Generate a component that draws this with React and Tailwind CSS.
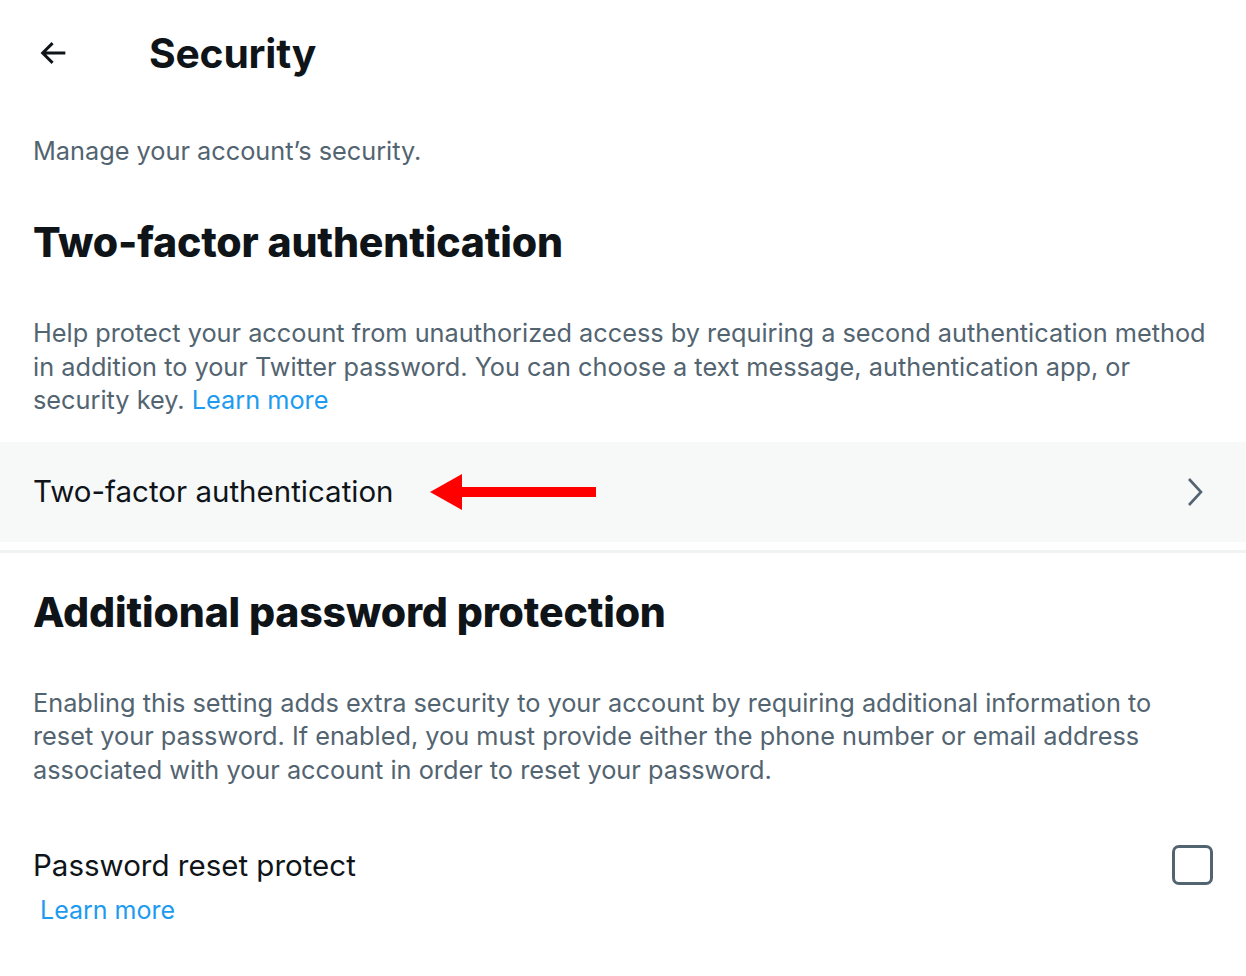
import React from "react";

export default function App() {
  return (
    <div className="min-h-screen w-[1246px] bg-white text-[#0f1419]" style={{ fontFamily: "Inter, 'Noto Sans', sans-serif" }}>
      {/* Header */}
      <div className="flex h-[106px] items-center">
        <div className="flex w-[149px] items-center pl-[37px]">
          <svg width="34" height="34" viewBox="0 0 24 24" fill="none">
            <path d="M20 12H4.5M11 5l-7 7 7 7" stroke="#0f1419" strokeWidth="2.1" strokeLinecap="butt" strokeLinejoin="miter" />
          </svg>
        </div>
        <h1 className="text-[40.8px] font-bold tracking-[-0.2px] leading-none">Security</h1>
      </div>

      <p className="mt-[28px] px-[33px] text-[25.3px] leading-[33px] text-[#536471]">Manage your account’s security.</p>

      <h2 className="mt-[50px] px-[33px] text-[41px] font-extrabold leading-[50px] tracking-[-0.15px]">Two-factor authentication</h2>

      <p className="mt-[49px] px-[33px] pr-[30px] text-[25.3px] leading-[33.5px] text-[#536471]">
        Help protect your account from unauthorized access by requiring a second authentication method in addition to your Twitter password. You can choose a text message, authentication app, or security key.{" "}
        <span className="text-[#1d9bf0]">Learn more</span>
      </p>

      <div className="mt-[25px] flex h-[100px] items-center bg-[#f7f9f9] pl-[33px] pr-[42px]">
        <span className="text-[29.5px] leading-none">Two-factor authentication</span>
        <svg className="ml-[36px]" width="166" height="38" viewBox="0 0 166 38">
          <polygon points="0,19 32,1 32,14 166,14 166,24 32,24 32,37" fill="#ff0000" />
        </svg>
        <div className="flex-1" />
        <svg width="18" height="30" viewBox="0 0 18 30" fill="none">
          <path d="M3 2l12 13L3 28" stroke="#536471" strokeWidth="2.6" />
        </svg>
      </div>

      <div className="mt-[8px] h-[3px] bg-[#eff3f4]" />

      <h2 className="mt-[34px] px-[33px] text-[41px] font-extrabold leading-[50px] tracking-[-0.15px]">Additional password protection</h2>

      <p className="mt-[49px] px-[33px] pr-[60px] text-[25.3px] leading-[33.5px] text-[#536471]">
        Enabling this setting adds extra security to your account by requiring additional information to reset your password. If enabled, you must provide either the phone number or email address associated with your account in order to reset your password.
      </p>

      <div className="mt-[62px] flex items-start justify-between pl-[33px] pr-[33px]">
        <div>
          <div className="text-[29.5px] leading-[34px]">Password reset protect</div>
          <div className="mt-[12px] pl-[7px] text-[25px] leading-[33px] text-[#1d9bf0]">Learn more</div>
        </div>
        <div className="mt-[-3px] h-[40px] w-[41px] rounded-[7px] border-[3px] border-[#536471]" />
      </div>
    </div>
  );
}
